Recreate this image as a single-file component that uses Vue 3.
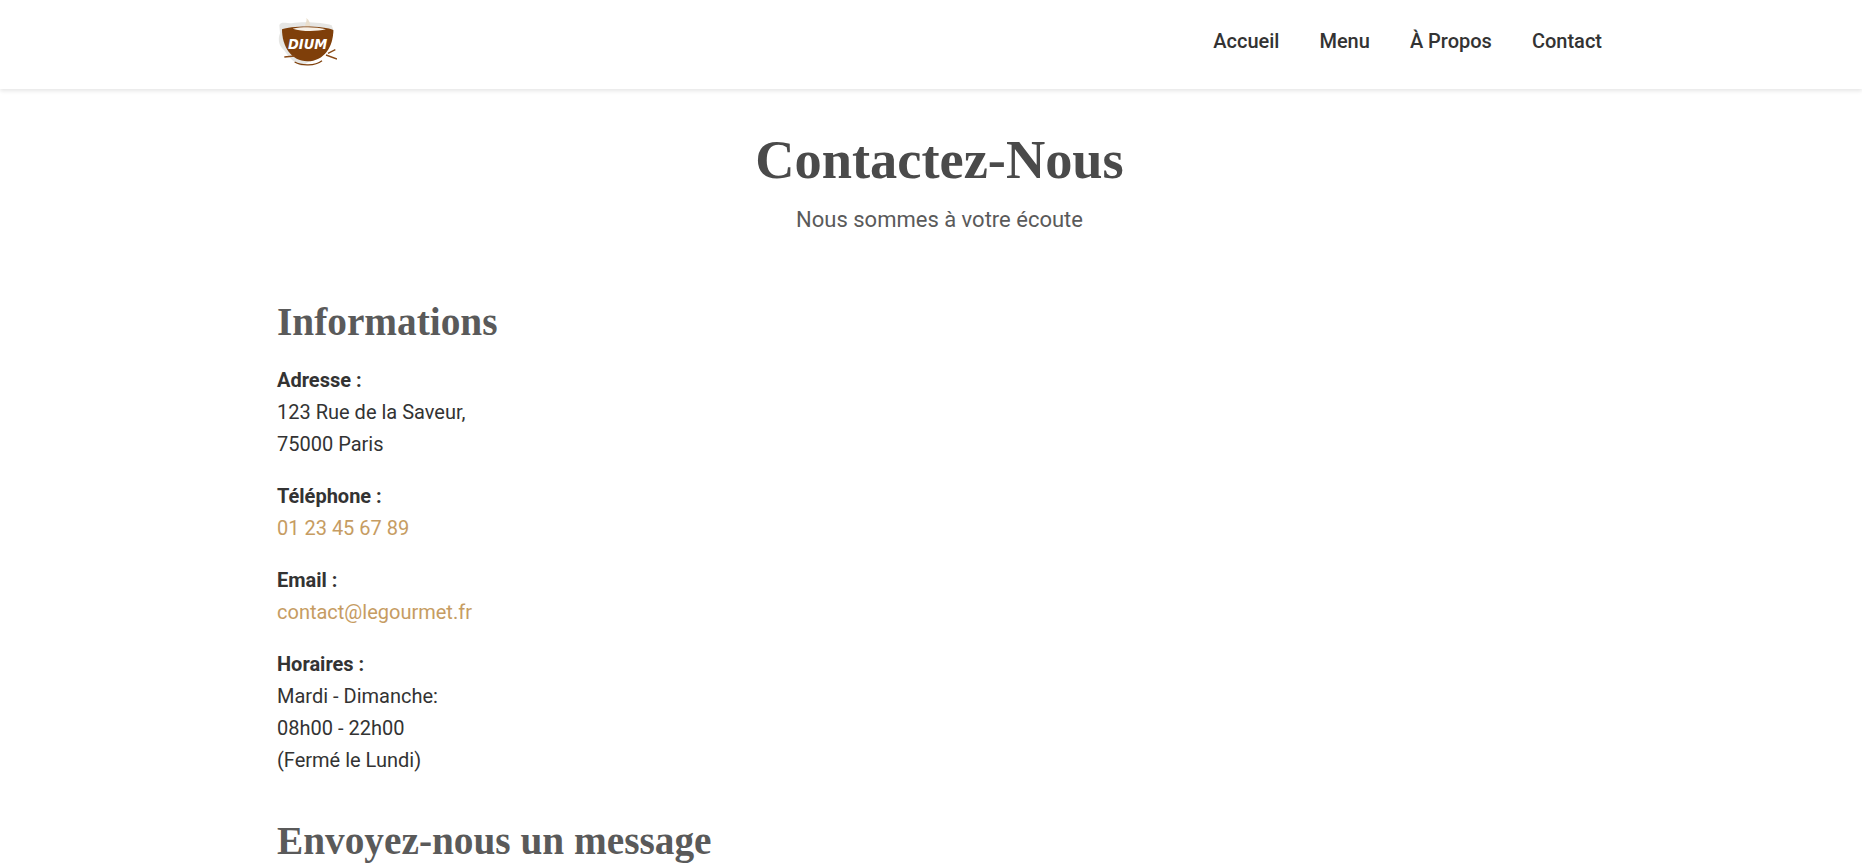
<template>
  <div class="page">
    <header class="site-header">
      <div class="container header-row">
        <a class="logo" href="#" aria-label="Accueil">
          <svg width="60" height="60" viewBox="51 42 180 180">
            <path d="M58 75 C62 64 80 70 95 70 C130 64 190 68 215 76 L222 95 L190 160 L125 198 C105 192 85 170 72 150 C58 140 52 120 60 100 Z" fill="#e6e6e4" />
            <path d="M136 80 C134 70 142 66 139 54 C148 60 152 70 150 82 Z" fill="#eadfcd" />
            <path d="M66 88 C90 76 195 76 220 90 C220 140 192 184 142 184 C94 184 66 140 66 88 Z" fill="#7f3f0a" />
            <path d="M98 86 C125 80 170 80 198 88 C170 95 125 95 98 86 Z" fill="#f7f0e6" />
            <text class="logo-word" x="84" y="146" textLength="118" lengthAdjust="spacingAndGlyphs">DIUM</text>
            <path d="M104 186 C125 198 165 198 186 182" fill="none" stroke="#7f3f0a" stroke-width="4" />
            <path d="M73 171 L104 168 M198 165 L231 177 M204 160 L226 149" fill="none" stroke="#8a4a16" stroke-width="4" />
          </svg>
        </a>
        <nav class="main-nav">
          <a v-for="link in links" :key="link" href="#">{{ link }}</a>
        </nav>
      </div>
    </header>

    <main class="container">
      <section class="page-title">
        <h1>Contactez-Nous</h1>
        <p>Nous sommes à votre écoute</p>
      </section>

      <section class="info">
        <h2>Informations</h2>
        <p><strong>Adresse :</strong><br />123 Rue de la Saveur,<br />75000 Paris</p>
        <p><strong>Téléphone :</strong><br /><a href="#">01 23 45 67 89</a></p>
        <p><strong>Email :</strong><br /><a href="#">contact@legourmet.fr</a></p>
        <p><strong>Horaires :</strong><br />Mardi - Dimanche:<br />08h00 - 22h00<br />(Fermé le Lundi)</p>
      </section>

      <section class="message">
        <h2>Envoyez-nous un message</h2>
      </section>
    </main>
  </div>
</template>

<script setup>
const links = ['Accueil', 'Menu', 'À Propos', 'Contact']
</script>

<style>
html, body {
  margin: 0;
  background: #fff;
  overflow: hidden;
}
</style>

<style scoped>
.page {
  height: 867px;
  overflow: hidden;
  font-family: Roboto, "Liberation Sans", sans-serif;
  font-size: 20px;
  line-height: 32px;
  color: #333;
}

.container {
  width: 1325px;
  margin-left: 277px;
}

.site-header {
  height: 89px;
  background: #fff;
  box-shadow: 0 2px 4px rgba(0, 0, 0, 0.1);
}

.header-row {
  height: 89px;
  display: flex;
  align-items: center;
  justify-content: space-between;
}

.logo {
  display: block;
  height: 60px;
  margin-top: -1px;
}

.logo-word {
  font-family: "DejaVu Sans", sans-serif;
  font-size: 44px;
  font-style: italic;
  font-weight: 700;
  fill: #fff;
}

.main-nav {
  display: flex;
  gap: 40px;
  margin-top: -8px;
}

.main-nav a {
  color: #333;
  font-weight: 500;
  text-decoration: none;
}

.page-title {
  padding-top: 40px;
  text-align: center;
}

h1, h2 {
  margin: 0;
  font-family: "Liberation Serif", "DejaVu Serif", serif;
  font-weight: 700;
}

h1 {
  font-size: 54.4px;
  line-height: 62px;
  color: #4a4a4a;
}

.page-title p {
  margin: 13px 0 0;
  font-size: 22px;
  color: #5a5a5a;
}

.info {
  margin-top: 62px;
}

h2 {
  font-size: 39.3px;
  line-height: 48px;
  color: #5a5a5a;
}

.info p {
  margin: 20px 0 0;
  color: #333;
}

.info h2 + p {
  margin-top: 18px;
}

.info a {
  color: #c69c62;
  text-decoration: none;
}

.message {
  margin-top: 41px;
}
</style>
